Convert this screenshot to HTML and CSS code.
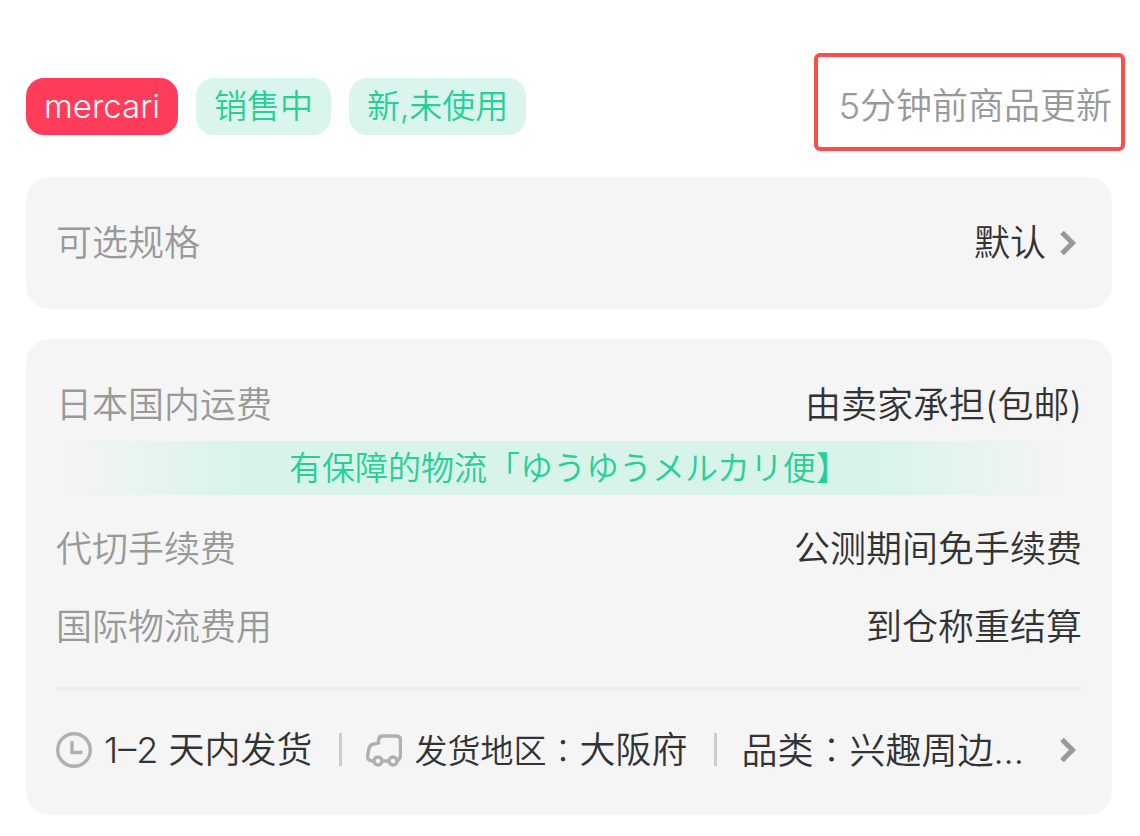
FILE: index.html
```html
<!DOCTYPE html>
<html lang="zh-CN">
<head>
    <meta charset="UTF-8">
    <meta name="viewport" content="width=device-width, initial-scale=1.0">
    <title>商品详情</title>
    <link rel="stylesheet" href="styles.css">
</head>
<body>
    <main>
        <header class="item-header">
            <div class="tags">
                <span class="tag tag-shop">mercari</span>
                <span class="tag">销售中</span>
                <span class="tag">新,未使用</span>
            </div>
            <div class="updated">5分钟前商品更新</div>
        </header>

        <button type="button" class="card spec">
            <span class="label">可选规格</span>
            <span class="spec-value">
                默认
                <svg class="chevron" viewBox="0 0 24 36" aria-hidden="true"><path d="M4 7.500 14.500 18 4 28.500"/></svg>
            </span>
        </button>

        <section class="card shipping">
            <dl class="fees">
                <div class="row">
                    <dt class="label">日本国内运费</dt>
                    <dd>由卖家承担(包邮)</dd>
                </div>
                <div class="banner">有保障的物流「ゆうゆうメルカリ便】</div>
                <div class="row">
                    <dt class="label">代切手续费</dt>
                    <dd>公测期间免手续费</dd>
                </div>
                <div class="row">
                    <dt class="label">国际物流费用</dt>
                    <dd>到仓称重结算</dd>
                </div>
            </dl>

            <button type="button" class="summary">
                <span class="fact">
                    <svg class="icon" viewBox="0 0 36 36" aria-hidden="true">
                        <circle cx="18" cy="18" r="16.300"/>
                        <path d="M16 9v11.500h10.500"/>
                    </svg>
                    <span>1–2 天内发货</span>
                </span>
                <span class="fact">
                    <svg class="icon" viewBox="0 0 36 36" aria-hidden="true">
                        <path d="M8 29H6.500Q1.500 28.500 1.500 24.500L3 16.500Q4 12.500 8 12L12.500 11V8Q13 4 17 4H30Q34.500 4 34.500 8.500V23.500Q34.500 27 31 29M16 29h6.500"/>
                        <circle cx="12" cy="29" r="4"/>
                        <circle cx="27" cy="29" r="4"/>
                    </svg>
                    <span><span class="small">发货地区<span class="colon" lang="zh-TW">：</span></span>大阪府</span>
                </span>
                <span class="fact">
                    <span>品类<span class="colon" lang="zh-TW">：</span>兴趣周边...</span>
                </span>
                <svg class="chevron" viewBox="0 0 24 36" aria-hidden="true"><path d="M4 7.500 14.500 18 4 28.500"/></svg>
            </button>
        </section>
    </main>
</body>
</html>
```
FILE: styles.css
```css
:root {
    --text-color: #333333;
    --muted-color: #999999;
    --card-bg: #f5f5f5;
    --green: #26cf96;
    --green-bg: #daf5ed;
}

* {
    margin: 0;
    padding: 0;
    box-sizing: border-box;
}

body {
    font-family: Inter, "Noto Sans CJK SC", sans-serif;
    font-size: 36px;
    font-weight: 350;
    line-height: 52px;
    color: var(--text-color);
    background: #ffffff;
}

main {
    padding: 78px 28px 20px 26px;
}

button {
    font: inherit;
    color: inherit;
    text-align: left;
    background: none;
    border: none;
    cursor: pointer;
}

.item-header {
    display: flex;
    justify-content: space-between;
    align-items: center;
    margin-bottom: 42px;
    white-space: nowrap;
}

.tags {
    display: flex;
    gap: 18px;
}

.tag {
    padding: 0 18px;
    font-size: 33px;
    line-height: 57px;
    color: var(--green);
    background: var(--green-bg);
    border-radius: 18px;
}

.tag-shop {
    color: #ffffff;
    background: #ff3d5a;
}

.updated {
    position: relative;
    line-height: 57px;
    color: var(--muted-color);
}

/* red highlight drawn around the update time */
.updated::after {
    content: "";
    position: absolute;
    inset: -25px -13px -16px -25px;
    border: 4px solid #f94e4a;
    border-radius: 6px;
}

.card {
    width: 100%;
    padding: 40px 30px;
    background: var(--card-bg);
    border-radius: 24px;
}

.label {
    color: var(--muted-color);
}

.spec {
    display: flex;
    justify-content: space-between;
    align-items: center;
    margin-bottom: 30px;
}

.spec-value {
    display: flex;
    align-items: center;
    gap: 12px;
}

.shipping {
    padding-bottom: 38px;
}

.chevron {
    flex: none;
    width: 24px;
    height: 36px;
    fill: none;
    stroke: var(--muted-color);
    stroke-width: 5;
}

.row {
    display: flex;
    justify-content: space-between;
    margin-bottom: 26px;
}

.row:first-child {
    margin-bottom: 10px;
}

.banner {
    margin-bottom: 28px;
    font-size: 33px;
    line-height: 54px;
    text-align: center;
    color: var(--green);
    background: linear-gradient(90deg, #d8f3ea00, #d8f3ea 18%, #d8f3ea 80%, #d8f3ea00 99%);
}

.fees {
    padding-bottom: 8px;
    border-bottom: 3px solid #ededed;
}

.summary {
    display: flex;
    align-items: center;
    width: 100%;
    padding-top: 32px;
    white-space: nowrap;
}

.fact {
    display: flex;
    align-items: center;
    gap: 12px;
}

.fact + .fact::before {
    content: "";
    width: 3px;
    height: 33px;
    margin: 0 12px 0 27px;
    background: #cccccc;
}

.summary .chevron {
    margin-left: auto;
}

.icon {
    flex: none;
    width: 36px;
    height: 36px;
    fill: none;
    stroke: #b0b0b0;
    stroke-width: 3.4;
}

.small {
    font-size: 33px;
}

/* the traditional form of the full-width colon sits in the middle */
.colon {
    font-family: "Noto Sans CJK TC", sans-serif;
    font-weight: 300;
}
```
